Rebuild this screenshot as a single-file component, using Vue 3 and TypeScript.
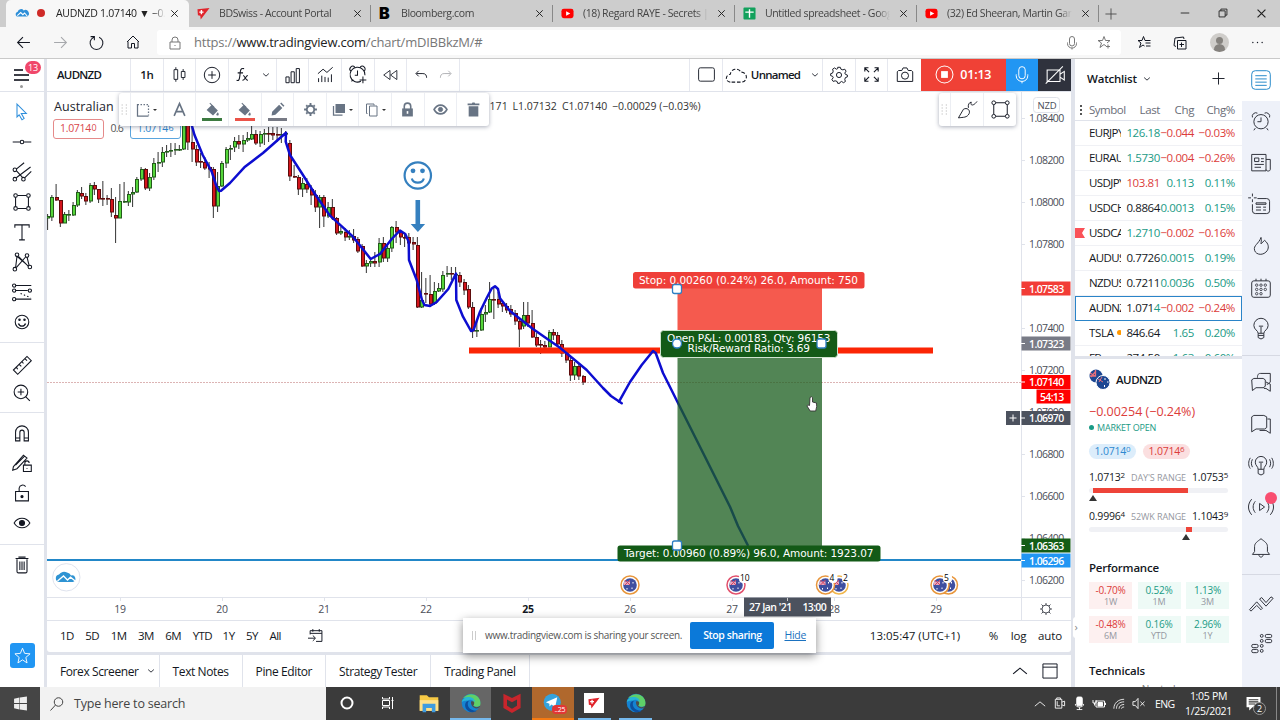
<script setup lang="ts">
import { h } from 'vue'
import type { FunctionalComponent } from 'vue'

// Icon markup, drawn on a 28x28 grid
const icons: Record<string, string> = {
  cloudLogo: '<path fill="#2f8fd8" stroke="none" d="M2 22a6 6 0 0 1 2-11 8 8 0 0 1 14-3 7 7 0 0 1 8 14z"/><path stroke="#fff" stroke-width="2.500" d="M3 20l8-7 5 5 4-4 6 7"/>',
  bds: '<path fill="#e0242b" stroke="none" d="M1 5l26-3L8 27l-1-8-5-1z"/><path stroke="#fff" stroke-width="3" d="M5 11h9M9.500 6.500v9"/>',
  youtube: '<rect x="1" y="4" width="26" height="20" rx="5" fill="#f00" stroke="none"/><path fill="#fff" stroke="none" d="M11 9l9 5-9 5z"/>',
  sheets: '<rect x="1" y="1" width="26" height="26" rx="2" fill="#12a15c" stroke="none"/><path stroke="#fff" stroke-width="3" d="M5 11h18M14 5v18"/>',
  close: '<path stroke-width="3" d="M4 4l20 20M24 4L4 24"/>',
  back: '<path d="M26 14H3M13 4L3 14l10 10"/>',
  forward: '<path d="M2 14h23M15 4l10 10-10 10"/>',
  reload: '<path d="M9 4a12 12 0 1 0 10 0M3 3h7v7"/>',
  home: '<path d="M4 13v13h7v-9h6v9h7V13M2 14L14 2l12 12"/>',
  padlock: '<path d="M4 12h20v14H4zM8 12V8a6 6 0 0 1 12 0v4M14 18v2"/>',
  mic: '<rect x="9" y="1" width="10" height="19" rx="5"/><path d="M5 13v2c0 12 18 12 18 0v-2M14 24v3"/>',
  starPlus: '<path d="M18 20l-4-3-8 6 3-9-7-5h9l3-8 3 8h9l-6 5M22 17v8M18 21h8"/>',
  starList: '<path d="M15 20l-3-2-7 5 3-9-6-5h8l3-8 3 8h11M17 14h10M18 20h9"/>',
  collections: '<path d="M9 9h17v17H9zM6 21l-4-2L4 4l17-2 1 4M17 13v9M13 17h9"/>',
  dots: '<path stroke-width="3" stroke-linecap="round" d="M4 14h0M14 14h0M24 14h0"/>',
  plus: '<path stroke-width="2" d="M14 1v26M1 14h26"/>',
  minus: '<path stroke-width="2.500" d="M2 14h24"/>',
  restore: '<path stroke-width="2.500" d="M3 8h17v17H3zM8 8V3h17v17h-5"/>',
  candles: '<path d="M5 6h6v16H5zM8 2v4M8 22v4M17 9h6v10h-6zM20 5v4M20 19v4"/>',
  compare: '<circle cx="14" cy="14" r="12"/><path d="M14 8v12M8 14h12"/>',
  fx: '<path stroke-width="2" d="M3 25c5 1 5-2 6-8l1-9c1-5 3-6 7-5M5 11h10M15 16c4 0 4 9 9 9M24 16c-4 0-5 9-10 9"/>',
  chevron: '<path stroke-width="3" d="M4 9l10 9 10-9"/>',
  chevronUp: '<path stroke-width="2" d="M2 19L14 9l12 10"/>',
  bars: '<path d="M3 17h5v9H3zM11 9h5v17h-5zM19 4h5v22h-5z"/>',
  financials: '<path d="M3 12l8-7 6 5 9-8M4 25v-6M9 25V15M14 25v-8M19 25v-7M24 25V13"/>',
  alarmPlus: '<path d="M19 24a11 11 0 1 1 6-9M14 8v7h-4M4 9a4 4 0 0 1 6-6M18 3a4 4 0 0 1 6 6M5 24l3-2M22 17v10M17 22h10"/>',
  rewind: '<path d="M14 6v16L3 14zM26 6v16l-11-8z"/>',
  undo: '<path stroke-width="2" d="M8 6l-6 6 6 6M3 12h14c6 0 8 4 8 9"/>',
  redo: '<path stroke-width="2" d="M20 6l6 6-6 6M25 12H11c-6 0-8 4-8 9"/>',
  frame: '<rect x="1" y="3" width="26" height="22" rx="3"/>',
  cloudDash: '<path stroke-dasharray="5 2.500" d="M6 24a5.500 5.500 0 0 1 0-11 8 8 0 0 1 15-3 7 7 0 0 1 1 14z"/>',
  gear: '<circle cx="14" cy="14" r="4"/><path d="M12 2h4l1 3 3 1 3-1 2 3-2 3 1 2 3 1v3l-3 1-1 3 1 3-3 2-3-2-2 1-1 2h-3l-1-3-3-1-3 1-2-3 2-3-1-2-3-1v-3l3-1 1-3-1-3 3-2 3 2 2-1z"/>',
  gearBold: '<circle cx="14" cy="14" r="7" stroke-width="3.500"/><path stroke-width="3.500" d="M14 2v4M14 22v4M2 14h4M22 14h4M6 6l2 2M20 20l2 2M6 22l2-2M20 8l2-2"/>',
  sun: '<circle cx="14" cy="14" r="8"/><path d="M14 2v4M14 22v4M2 14h4M22 14h4M5 5l3 3M20 20l3 3M5 23l3-3M20 8l3-3"/>',
  expand: '<path stroke-width="1.800" d="M3 9V3h6M3 3l7 7M19 3h6v6M25 3l-7 7M3 19v6h6M3 25l7-7M19 25h6v-6M25 25l-7-7"/>',
  camera: '<path d="M4 7h5l2-4h6l2 4h5l2 2v15H2V9z"/><circle cx="14" cy="15" r="5.500"/>',
  stop: '<circle cx="14" cy="14" r="12.500"/><path fill="#fff" stroke="none" d="M9 9h10v10H9z"/>',
  noCamera: '<path d="M3 7h18v16H3zM21 13l6-4v12l-6-4M1 26L25 2"/>',
  grip: '<path stroke-width="2.500" stroke-dasharray="2.500 4" d="M9 3v23M18 3v23"/>',
  dashBox: '<path stroke-width="2.500" d="M3 2v24h22"/><path stroke-width="2.500" stroke-dasharray="3 3" d="M3 3h22v22"/>',
  letterA: '<path stroke-width="3" d="M4 26L14 3l10 23M8 18h12"/>',
  bucket: '<path fill="currentColor" stroke="none" d="M13 5l11 11-9 9L3 15zM24 19c5 7-3 8-3 4z"/><path stroke-width="2" d="M9 2l8 8"/>',
  pencil: '<path fill="currentColor" stroke="none" d="M3 25l1-7L17 5l6 6-13 13zM19 3l2-2 6 6-2 2z"/>',
  layers: '<path fill="currentColor" stroke="none" d="M7 2h19v18H7z"/><path stroke-width="2.500" d="M3 6v18h18"/>',
  copy: '<path stroke-width="2" d="M9 6h15v20H9zM5 21H3V2h15v3"/>',
  lockBold: '<path fill="currentColor" stroke="none" d="M4 12h20v15H4z"/><path stroke-width="3" d="M8 13V8a6 6 0 0 1 12 0v5"/><path stroke="#fff" stroke-width="3" d="M14 17v5"/>',
  eyeBold: '<path stroke-width="3" d="M2 14c6-11 18-11 24 0-6 11-18 11-24 0z"/><circle cx="14" cy="14" r="4" fill="currentColor"/>',
  binBold: '<path fill="currentColor" stroke="none" d="M5 8h18v19H5zM3 3h8l1-2h4l1 2h8v3H3z"/>',
  brush: '<path d="M2 25l7-12c5-3 10 1 8 6-3 6-8 5-15 6zM16 11c-1-4 1-8 4-8-2 5 3 6 8-1"/>',
  square: '<path d="M5 8v12M23 8v12M8 5h12M8 23h12"/><circle cx="5" cy="5" r="2.500"/><circle cx="23" cy="5" r="2.500"/><circle cx="5" cy="23" r="2.500"/><circle cx="23" cy="23" r="2.500"/>',
  cursor: '<path d="M7 3l13 13h-7l4 7-3 2-4-7-3 3z"/>',
  line: '<path d="M1 14h10M17 14h10"/><circle cx="14" cy="14" r="2.500"/>',
  pitchfork: '<path d="M6 10l11-9M6 12l9 10M6 22l20-15M18 22l9-9"/><circle cx="4" cy="11" r="2.500"/><circle cx="4" cy="24" r="2.500"/><circle cx="16" cy="24" r="2.500"/>',
  text: '<path d="M4 8V4h20v4M14 4v21M10 25h8"/>',
  pattern: '<path d="M5 22L7 6l14 12M21 7l3 12M19 7L6 22M9 6l14 14"/><circle cx="7" cy="4" r="2.500"/><circle cx="21" cy="5" r="2.500"/><circle cx="4" cy="24" r="2.500"/><circle cx="25" cy="21" r="2.500"/>',
  forecast: '<path d="M5 5h22M5 12h17M5 24h22"/><path stroke-dasharray="2 3" d="M12 16l14 6"/><circle cx="3" cy="5" r="2.300"/><circle cx="3" cy="12" r="2.300"/><circle cx="25" cy="12" r="2.300"/><circle cx="3" cy="24" r="2.300"/>',
  smile: '<circle cx="14" cy="14" r="9.500"/><path stroke-width="2" d="M9 16c2 5 8 5 10 0"/><circle cx="10.500" cy="11" r="1" fill="currentColor"/><circle cx="17.500" cy="11" r="1" fill="currentColor"/>',
  ruler: '<path d="M2 21L21 2l6 6L8 27zM6 17l2 3M10 13l3 3M14 9l2 3M18 5l3 3"/>',
  zoom: '<circle cx="12.500" cy="12.500" r="9.500"/><path d="M19 19l6 6M12.500 8v9M8 12.500h9"/>',
  magnet: '<path d="M5 25V13a9 9 0 0 1 18 0v12h-6V13a3 3 0 0 0-6 0v12zM5 21h6M17 21h6"/>',
  pencilLock: '<path d="M2 19L16 3l5 4L7 22l-6 2zM5 17L18 4M16 17h11v9H16zM18 17v-3a3 3 0 0 1 6 0M21 21v1"/>',
  unlock: '<path d="M5 12h18v13H5zM10 12V7a5 5 0 0 1 9-2"/><circle cx="14" cy="19" r="1.500" fill="currentColor"/>',
  eye: '<path d="M3 14c5-9 17-9 22 0-5 9-17 9-22 0z"/><circle cx="14" cy="14" r="3.500" fill="currentColor"/>',
  bin: '<path d="M7 6v17a2 2 0 0 0 2 2h10a2 2 0 0 0 2-2V6M5 5h18M9 3h10M11 9v12M14 9v12M17 9v12"/>',
  star: '<path d="M14 2l3.500 8.500 9 .7-7 6 2 9-7.500-5-7.500 5 2-9-7-6 9-.7z"/>',
  goto: '<path stroke-width="1.800" d="M4 12V5h22v20H15M4 10h22M9 2v5M21 2v5M0 19h13M9 14l5 5-5 5"/>',
  panel: '<path d="M3 3h22v22H3zM3 8h22"/>',
  list: '<rect x="1" y="1" width="26" height="26" rx="5"/><path d="M6 8h16M6 12.500h16M6 17h16M6 21.500h16"/>',
  alarm: '<circle cx="14" cy="15" r="10"/><path d="M14 9v6H9M2 9a5 5 0 0 1 7-6M19 3a5 5 0 0 1 7 6M6 24l-2 3M22 24l2 3"/>',
  news: '<path d="M1 2h20v23H1zM21 9h6v14c0 3-6 3-6 0M5 7h6v5H5zM14 8h4M14 12h4M5 16h13M5 20h9"/>',
  note: '<path d="M9 5h13a4 4 0 0 1 4 4v13a4 4 0 0 1-4 4H6a4 4 0 0 1-4-4v-9M2 -2v4M2 6v4M-4 4h4M4 4h4M7 11h14v2H7zM7 17h7M17 17h4M7 21h7M17 21h4"/>',
  flame: '<path d="M14 2c1 4 0 7 0 9l5-5c6 5 6 10 4 14-5 8-16 7-18 0-2-7 6-9 9-18z"/>',
  calendar: '<rect x="1" y="4" width="26" height="23" rx="3"/><path d="M7 1v3M14 1v3M21 1v3"/><g stroke-width="1.200"><circle cx="8" cy="10" r="1.700"/><circle cx="14" cy="10" r="1.700"/><circle cx="20" cy="10" r="1.700"/><circle cx="8" cy="16" r="1.700"/><circle cx="14" cy="16" r="1.700"/><circle cx="20" cy="16" r="1.700"/><circle cx="8" cy="22" r="1.700"/><circle cx="14" cy="22" r="1.700"/></g>',
  bulb: '<path d="M10 20c0-4-6-5-6-11a10 10 0 0 1 20 0c0 6-6 7-6 11zM10 20v6l4 2 4-2v-6M14 11v9M11 10h6M10 23h8"/>',
  chats: '<path d="M1 11l3-2h13l3 2v9l-3 2H7l-5 4zM9 8c0-5 2-6 4-6h14v12l-3 3h-2M21 14l6 3v10l-6-4h-3"/>',
  chat: '<path d="M1 4l3-2h14l4 2v15l-3 2H7l-6 4zM23 7h4v20l-6-4h-9"/>',
  ideas: '<path d="M10 20c0-4-4-5-4-10a8 8 0 0 1 16 0c0 5-4 6-4 10zM10 20v6l4 2 4-2v-6M14 11v9M11 10h6M2 6c-2 4-2 7 0 11M-1 4c-3 5-3 11 0 15M26 6c2 4 2 7 0 11M29 4c3 5 3 11 0 15"/>',
  stream: '<path d="M12 9l7 5-7 5zM6 6c-4 5-4 11 0 16M1 3c-6 7-6 15 0 22M22 6c4 5 4 11 0 16M27 3c6 7 6 15 0 22"/>',
  bell: '<path d="M2 23l3-4v-7c0-5 4-7 9-11 5 4 9 6 9 11v7l3 4zM11 23c0 5 6 5 6 0"/>',
  ideasFlow: '<path d="M-2 22L8 11l8 9-2 2-6-6-8 8zM12 7l3-2 6 7 7-8 3 2-10 11z"/>',
  dom: '<circle cx="15" cy="4" r="2"/><circle cx="15" cy="11" r="2"/><circle cx="15" cy="18" r="2"/><circle cx="15" cy="25" r="2"/><rect x="20" y="2" width="9" height="4.500" rx="2"/><rect x="20" y="9" width="9" height="4.500" rx="2"/><rect x="1" y="16" width="9" height="4.500" rx="2"/><rect x="1" y="23" width="9" height="4.500" rx="2"/>',
  windows: '<path fill="#eee" stroke="none" d="M2 5l10-2v10H2zM13 3l13-2v12H13zM2 15h10v10L2 23zM13 15h13v12l-13-2z"/>',
  search: '<circle cx="17" cy="10" r="8.500" stroke-width="2"/><path stroke-width="2" d="M11 16L1 27"/>',
  cortana: '<circle cx="14" cy="14" r="11" stroke-width="4"/>',
  taskview: '<path stroke-width="2" d="M3 2v4h14V2M3 9h14v10H3zM3 26v-4h14v4M23 2v24M21 9h4"/>',
  folder: '<path fill="#f6c945" stroke="none" d="M1 3h10l3 3h13v19H1z"/><path fill="#ffe08a" stroke="none" d="M1 10h26v15H1z"/><path fill="#3f9be0" stroke="none" d="M5 15h18v12h-5v-6h-8v6H5z"/>',
  edge: '<circle cx="14" cy="14" r="13" fill="#1583d2" stroke="none"/><path fill="#5fd068" stroke="none" d="M3 7C12-4 30 3 27 17c-2 3-7 3-10 1 4-7-4-13-14-11z"/><path fill="#27b6d6" stroke="none" d="M1 13C2 4 18 2 20 13c0 0-4-5-9-3C7 11 3 10 1 13z"/><path fill="#0d4f9e" stroke="none" d="M11 11c-4 6 0 14 11 14C13 31 4 22 6 15c1-3 3-4 5-4z"/><path fill="#4d4d4d" stroke="none" d="M14 12c6-2 5 4 3 6 3 3 7 2 10 0-3 7-14 3-13-6z"/>',
  mcafee: '<path fill="#c9252c" stroke="none" d="M2 1l12 6 12-6v20l-12 7-12-7zM7 9v9l7 4 7-4V9l-7 4z" fill-rule="evenodd"/>',
  telegram: '<circle cx="13" cy="13" r="12" fill="#35a3dc" stroke="none"/><path fill="#fff" stroke="none" d="M4 13l16-7-3 14-5-4-3 3v-4z"/>',
  meet: '<path d="M5 5h14v19H5zM8 5V2h8v3M19 11l6-2v10l-6-2M9 9v10h6"/>',
  micSolid: '<rect x="8" y="0" width="12" height="19" rx="3" fill="#fff"/><path d="M5 15c0 9 18 9 18 0M14 22v6M8 27h12"/>',
  battery: '<path d="M8 8h17v12H8zM25 12h2v4M2 6v6h6V6M5 12v5"/><path fill="#fff" d="M12 11h9v7h-9z"/>',
  wifi: '<path d="M2 25C2 12 12 3 26 3M8 25C8 15 15 9 26 9M14 25c0-6 5-10 12-10M20 25c0-3 2-4 6-4"/>',
  mute: '<path d="M2 10h5l6-7v22l-6-7H2zM18 10l9 9M27 10l-9 9"/>',
  notes: '<path fill="#fff" stroke="none" d="M1 2h26v19H12l-6 6v-6H1z"/><path stroke="#333" stroke-width="2" d="M5 7h18M5 11h18M5 15h12"/>',
}

const Icon: FunctionalComponent<{ name: string; size?: number }> = (props) =>
  h('svg', {
    class: 'icon',
    viewBox: '0 0 28 28',
    width: props.size ?? 20,
    height: props.size ?? 20,
    innerHTML: icons[props.name],
  })

const tabs = [
  { icon: 'bds', title: 'BDSwiss - Account Portal' },
  { icon: 'bloom', title: 'Bloomberg.com' },
  { icon: 'youtube', title: '(18) Regard RAYE - Secrets | O' },
  { icon: 'sheets', title: 'Untitled spreadsheet - Google' },
  { icon: 'youtube', title: '(32) Ed Sheeran, Martin Garrix' },
]

const drawTools = [
  ['cursor', 'line', 'pitchfork', 'square', 'text', 'pattern', 'forecast', 'smile'],
  ['ruler', 'zoom'],
  ['magnet', 'pencilLock', 'unlock', 'eye'],
  ['bin'],
]

const floatTools = [
  { icon: 'dashBox', caret: true },
  { icon: 'letterA' },
  { icon: 'bucket', bar: 'green' },
  { icon: 'bucket', bar: 'red' },
  { icon: 'pencil', bar: 'grey' },
  { icon: 'gearBold' },
  { icon: 'layers', caret: true },
  { icon: 'copy', caret: true },
  { icon: 'lockBold' },
  { icon: 'eyeBold' },
  { icon: 'binBold' },
]

const railGroups = [
  ['list', 'alarm', 'news', 'note', 'flame', 'calendar', 'bulb'],
  ['chats', 'chat', 'ideas', 'stream', 'bell'],
  ['ideasFlow', 'dom'],
]

interface Quote {
  symbol: string
  last: string
  tail?: string
  lastTone: string
  chg: string
  pct: string
  flag?: boolean
  dot?: boolean
  active?: boolean
}

const quotes: Quote[] = [
  { symbol: 'EURJPY', last: '126.18', lastTone: 'up', chg: '−0.044', pct: '−0.03%' },
  { symbol: 'EURAUD', last: '1.5730', lastTone: 'up', chg: '−0.004', pct: '−0.26%' },
  { symbol: 'USDJPY', last: '103.81', lastTone: 'down', chg: '0.113', pct: '0.11%' },
  { symbol: 'USDCHF', last: '0.8864', lastTone: '', chg: '0.0013', pct: '0.15%' },
  { symbol: 'USDCAD', last: '1.2710', lastTone: 'up', chg: '−0.002', pct: '−0.16%', flag: true },
  { symbol: 'AUDUSD', last: '0.7726', lastTone: '', chg: '0.0015', pct: '0.19%' },
  { symbol: 'NZDUSD', last: '0.7211', lastTone: '', chg: '0.0036', pct: '0.50%' },
  { symbol: 'AUDNZD', last: '1.071', tail: '4', lastTone: '', chg: '−0.002', pct: '−0.24%', active: true },
  { symbol: 'TSLA', last: '846.64', lastTone: '', chg: '1.65', pct: '0.20%', dot: true },
  { symbol: 'FB', last: '274.50', lastTone: '', chg: '1.63', pct: '0.60%' },
]

const tone = (v: string) => (v.startsWith('−') || v.startsWith('-') ? 'down' : 'up')

const performance = [
  ['-0.70%', '1W'], ['0.52%', '1M'], ['1.13%', '3M'],
  ['-0.48%', '6M'], ['0.16%', 'YTD'], ['2.96%', '1Y'],
]

const ranges = ['1D', '5D', '1M', '3M', '6M', 'YTD', '1Y', '5Y', 'All']
const bottomTabs = ['Text Notes', 'Pine Editor', 'Strategy Tester', 'Trading Panel']

const priceTicks = [
  ['1.08400', 118], ['1.08200', 160], ['1.08000', 202], ['1.07800', 244], ['1.07400', 328],
  ['1.07200', 370], ['1.07000', 412], ['1.06800', 454], ['1.06600', 496], ['1.06400', 538], ['1.06200', 580],
] as const

const priceTags = [
  { text: '1.07583', y: 288.5, fill: '#f23c36' },
  { text: '1.07323', y: 343.5, fill: '#787b86' },
  { text: '1.07140', y: 382, fill: '#ff0000' },
  { text: '1.06970', y: 418, fill: '#4c525e' },
  { text: '1.06363', y: 545.5, fill: '#145d16' },
  { text: '1.06296', y: 560.5, fill: '#2196f3' },
]

const dayTicks = [
  ['19', 120], ['20', 222], ['21', 324], ['22', 426], ['25', 528], ['26', 630], ['27', 732], ['28', 834], ['29', 936],
] as const

// direction, high, body top, body bottom, low
const candleData = `g214 216 218 230;g195 197 217 221;r184 197 200 201;r200 200 223 227;g212 214 223 223;g210 214 215 221;g202 205 215 216;g190 192 205 207;r187 193 196 199;r193 196 201 205;g183 185 201 203;r182 185 189 195;r189 189 199 203;r181 198 199 206;r195 198 199 205;r188 199 212 217;r197 215 218 243;g184 201 218 218;g182 201 202 203;g191 194 202 206;g187 192 194 207;g177 179 192 193;g167 169 179 181;r168 169 188 190;g173 177 188 191;g158 163 177 180;g152 162 163 172;g147 152 162 167;g145 151 152 157;g143 150 151 157;g143 149 150 155;g145 149 150 151;g118 120 149 150;r118 120 142 150;r123 142 149 162;r145 149 162 166;r153 161 162 168;r157 162 168 170;r162 167 169 178;r167 169 206 218;g172 186 206 212;g161 163 186 187;g147 149 163 168;g145 148 149 160;g137 141 147 152;r135 141 144 149;g135 140 144 152;g132 138 140 142;g126 134 139 140;r130 134 143 145;g131 134 143 147;g129 133 134 145;r127 133 134 142;r127 133 135 140;r127 134 135 142;g128 134 135 143;g131 133 134 140;r140 143 176 181;r165 176 177 178;r175 177 189 195;g178 183 189 197;r178 184 189 193;r185 189 195 205;r190 195 207 212;g195 197 207 228;r195 197 216 227;g202 207 216 218;r199 207 218 220;r217 218 233 235;g227 231 233 235;r228 232 237 241;g230 236 237 240;r229 236 240 243;r237 239 251 253;r244 246 266 267;g260 263 266 273;g258 261 263 267;r252 261 263 267;g238 243 262 267;r237 243 258 262;g246 248 258 262;g226 227 248 252;r221 227 232 243;r230 231 237 245;r233 237 238 247;r233 237 243 246;r237 242 244 250;r237 245 307 308;g272 300 307 308;r278 293 294 303;r275 294 304 305;g282 291 303 305;g283 288 291 292;g271 275 289 292;g266 273 274 277;r267 273 274 280;g267 274 275 280;r272 275 282 287;r279 282 290 295;r285 289 307 309;r302 307 331 338;g320 330 331 337;g308 314 330 331;g305 312 314 322;g282 299 312 313;r287 299 300 319;r292 299 304 308;r300 303 306 312;r303 306 310 313;r305 309 314 317;r310 313 321 325;r318 321 329 347;g302 315 326 329;r302 315 323 327;r310 323 337 338;r333 337 345 347;r340 344 345 354;r341 345 347 350;g330 332 347 347;r329 332 335 340;r332 335 344 347;r340 344 353 357;r352 353 360 363;r356 360 375 381;g362 366 375 380;r363 366 376 380;r375 376 382 385`

const candles = candleData.split(';').map((row, i) => {
  const [high, top, bottom, low] = row.slice(1).split(' ').map(Number)
  const x = 47.6 + i * 4.25
  return { x, bx: Math.round(x - 1.6), up: row[0] === 'g', high, top, bottom, low }
})

const events = [
  { x: 630, ring: '#e8963c', count: '' },
  { x: 736, ring: '#e2506c', count: '10' },
  { x: 839, ring: '#f0b64c', count: '2' },
  { x: 825.5, ring: '#e8963c', count: '4' },
  { x: 948.5, ring: '#e8963c', count: '' },
  { x: 940, ring: '#e8963c', count: '5' },
]

const anchors = [
  { x: 677, y: 289, r: 2 },
  { x: 677, y: 343.5, r: 4.5 },
  { x: 821.5, y: 343.5, r: 2 },
  { x: 677, y: 545.5, r: 2 },
]

const taskbarApps = [
  { icon: 'cortana', state: '' },
  { icon: 'taskview', state: '' },
  { icon: 'folder', state: '' },
  { icon: 'edge', state: 'focused' },
  { icon: 'mcafee', state: '' },
  { icon: 'telegram', state: 'alert' },
  { icon: 'bds', state: 'running' },
  { icon: 'edge', state: 'running' },
]
</script>

<template>
  <div class="screen">
    <header class="tabstrip">
      <div class="tab tab--active">
        <Icon name="cloudLogo" :size="12" />
        <i class="rec-dot" />
        <span class="tab__title">AUDNZD 1.07140 ▼ −0.</span>
        <Icon class="tab__close" name="close" :size="9" />
      </div>
      <div v-for="(tab, i) in tabs" :key="i" class="tab">
        <b v-if="tab.icon === 'bloom'" class="bloom">B</b>
        <Icon v-else :name="tab.icon" :size="13" />
        <span class="tab__title">{{ tab.title }}</span>
        <Icon class="tab__close" name="close" :size="9" />
      </div>
      <Icon class="tabstrip__new" name="plus" :size="12" />
      <div class="window-buttons">
        <Icon name="minus" :size="10" />
        <Icon name="restore" :size="10" />
        <Icon name="close" :size="11" />
      </div>
    </header>

    <div class="addressbar">
      <div class="nav">
        <Icon name="back" :size="15" />
        <Icon class="faded" name="forward" :size="15" />
        <Icon name="reload" :size="15" />
        <Icon name="home" :size="14" />
      </div>
      <div class="url">
        <Icon name="padlock" :size="14" />
        <span class="url__text">https://<b>www.tradingview.com</b>/chart/mDIBBkzM/#</span>
        <Icon name="mic" :size="14" />
        <Icon name="starPlus" :size="14" />
      </div>
      <div class="browser-actions">
        <Icon name="starList" :size="14" />
        <Icon name="collections" :size="14" />
        <i class="avatar"><i /></i>
        <Icon name="dots" :size="13" />
      </div>
    </div>

    <main class="app">
      <nav class="draw">
        <div class="draw__menu">
          <i /><i /><i />
          <span class="badge">13</span>
        </div>
        <div v-for="(group, g) in drawTools" :key="g" class="draw__group">
          <div v-for="name in group" :key="name" class="draw__tool" :class="{ 'draw__tool--active': name === 'cursor' }">
            <Icon :name="name" :size="20" />
          </div>
        </div>
        <div class="draw__fav"><Icon name="star" :size="17" /></div>
      </nav>

      <section class="center">
        <div class="topbar">
          <div class="cell cell--symbol">AUDNZD</div>
          <div class="cell cell--text">1h</div>
          <div class="cell"><Icon name="candles" :size="17" /></div>
          <div class="cell"><Icon name="compare" :size="18" /></div>
          <div class="cell cell--fx"><Icon name="fx" :size="15" /><Icon name="chevron" :size="8" /></div>
          <div class="cell"><Icon name="bars" :size="18" /></div>
          <div class="cell"><Icon name="financials" :size="18" /></div>
          <div class="cell"><Icon name="alarmPlus" :size="19" /></div>
          <div class="cell"><Icon name="rewind" :size="16" /></div>
          <div class="cell cell--undo"><Icon name="undo" :size="13" /><Icon class="faded" name="redo" :size="13" /></div>
          <div class="topbar__space" />
          <div class="cell"><Icon name="frame" :size="17" /></div>
          <div class="cell cell--layout"><Icon name="cloudDash" :size="20" />Unnamed<Icon name="chevron" :size="8" /></div>
          <div class="cell"><Icon name="gear" :size="18" /></div>
          <div class="cell"><Icon name="expand" :size="17" /></div>
          <div class="cell cell--last"><Icon name="camera" :size="18" /></div>
          <div class="cell cell--rec"><Icon name="stop" :size="19" />01:13</div>
          <div class="cell cell--mic"><Icon name="mic" :size="18" /></div>
          <div class="cell cell--cam"><Icon name="noCamera" :size="20" /></div>
        </div>

        <div class="chart">
          <svg class="chart__canvas" viewBox="47 92 1024 528" width="1024" height="528">
            <g class="axis">
              <path d="M47 597.500H1071M1021.500 92V620" />
              <path v-for="[label, y] in priceTicks" :key="label" :d="`M1021 ${y + 0.5}h4`" />
              <path v-for="[label, x] in dayTicks" :key="label" :d="`M${x + 0.5} 597v4`" />
            </g>
            <text v-for="[label, y] in priceTicks" :key="label" class="tick" x="1029" :y="y + 4" textLength="35">{{ label }}</text>
            <text
              v-for="[label, x] in dayTicks"
              :key="label"
              class="tick tick--day"
              :class="{ 'tick--bold': label === '25' }"
              :x="x"
              y="613"
            >{{ label }}</text>

            <path class="current-line" d="M47 382.500H1021" />
            <path class="blue-level" d="M47 560H1021" />

            <g v-for="(c, i) in candles" :key="i">
              <path class="wick" :d="`M${c.x} ${c.high}V${c.low}`" />
              <rect
                :class="c.up ? 'body-up' : 'body-down'"
                :x="c.bx + 0.5"
                :y="c.top + 0.5"
                width="3"
                :height="Math.max(0.6, c.bottom - c.top - 0.5)"
              />
            </g>

            <path class="red-level" d="M469 350.500H933" />
            <path
              class="sketch"
              d="M191.700 125L194.500 135 202.700 155 211.700 171.700 216 185 219 191 221 190.700 230 183 245 166.700 263 153 286 132.700 285.700 141.700 290 155 301.700 173 315 194 330 215.700 353 236.700 370.700 259 380 254 391.700 239 400 230.500 405.300 234 408.700 241.700 409 260 416.700 280 422 300 424.500 305 430 306 436.700 302 448.300 289 456 273.500 456.300 300 463 316.700 471 331 473.500 330 480 311.700 486.700 298 491.700 288.500 495 286.300 498 289 500 298.300 510 311 533 329 560 347.700 586.700 370 603 388 611 396 621.700 403.300"
            />
            <path class="sketch" d="M619 401.700L630 382 641.700 365 653 351 655.700 353 663 373 678 403 705 456.700 730 506.700 738 526 747.700 545" />

            <rect x="677.500" y="288" width="144.500" height="56" fill="#f44336" fill-opacity=".88" />
            <rect x="677.500" y="344" width="144.500" height="203" fill="#1b5e20" fill-opacity=".76" />

            <g class="position">
              <rect x="633" y="272" width="231.500" height="16.500" rx="2.500" fill="#ef3f39" />
              <text x="639" y="283.700" textLength="219">Stop: 0.00260 (0.24%) 26.0, Amount: 750</text>
              <rect x="660.500" y="330.500" width="177" height="27" rx="3" fill="#135a17" stroke="#cfe3cf" />
              <text x="667" y="342" textLength="163.500">Open P&amp;L: 0.00183, Qty: 96153</text>
              <text x="687.500" y="352.300" textLength="122.500">Risk/Reward Ratio: 3.69</text>
              <rect x="617.500" y="545.500" width="263" height="16" rx="2.500" fill="#135a17" />
              <text x="624" y="557" textLength="249.500">Target: 0.00960 (0.89%) 96.0, Amount: 1923.07</text>
            </g>
            <rect
              v-for="(a, i) in anchors"
              :key="i"
              class="anchor"
              :x="a.x - 4.5"
              :y="a.y - 4.5"
              width="9"
              height="9"
              :rx="a.r"
            />

            <g class="sticker">
              <circle cx="417.800" cy="175.500" r="13.200" />
              <circle class="sticker__fill" cx="413" cy="170.800" r="2.400" />
              <circle class="sticker__fill" cx="422.500" cy="170.800" r="2.400" />
              <path d="M411.800 178.500c1.500 5.500 10.500 5.500 12 0" />
              <path class="sticker__fill" d="M415.500 200h4.600v24h5l-7.200 8-7.200-8h4.800z" />
            </g>

            <g v-for="(e, i) in events" :key="i">
              <circle :cx="e.x" cy="585" r="9" fill="#fff" :stroke="e.ring" stroke-width="1.500" />
              <circle :cx="e.x" cy="585" r="6.800" fill="#3f4fa0" />
              <path :d="`M${e.x - 6} 581.500h6v3.500h-6.500z`" fill="#e6a7bd" />
              <path :d="`M${e.x - 5} 580l5 5M${e.x} 580l-5 5`" stroke="#d04465" />
              <path :d="`M${e.x + 3} 582v1.500M${e.x + 2} 587.500v1.500M${e.x - 3} 588v1.500`" stroke="#fff" />
            </g>
            <g v-for="(e, i) in events" :key="`n${i}`">
              <rect v-if="e.count" :x="e.x + 3" y="573" :width="e.count.length * 5 + 4" height="10" rx="4" fill="#fff" />
              <text v-if="e.count" class="count" :x="e.x + 4" y="581">{{ e.count }}</text>
            </g>

            <g v-for="tag in priceTags" :key="tag.text">
              <rect x="1021.500" :y="tag.y - 7" width="49" height="14" :fill="tag.fill" />
              <path :d="`M1021 ${tag.y}h4`" stroke="#fff" />
              <text class="tag" x="1029" :y="tag.y + 4" textLength="35">{{ tag.text }}</text>
            </g>
            <rect x="1036.500" y="389.500" width="34" height="14" fill="#f00" />
            <text class="tag" x="1040" y="400.500" textLength="24">54:13</text>
            <rect x="1006" y="411" width="14" height="14" fill="#4c525e" />
            <path d="M1009.500 418h7M1013 414.500v7" stroke="#fff" />
            <rect class="ccy" x="1033.500" y="97.500" width="26" height="15" rx="3" />
            <text class="tick tick--ccy" x="1037.500" y="108.500">NZD</text>

            <rect x="744" y="597.500" width="87" height="19" fill="#4c525e" />
            <path d="M787.500 598v3" stroke="#ccc" />
            <text class="tag" x="749" y="611" textLength="43">27 Jan '21</text>
            <text class="tag" x="802.500" y="611" textLength="24">13:00</text>

            <text class="legend" x="54" y="110.500" textLength="59.500">Australian</text>
            <text class="legend legend--small" x="489.500" y="110" textLength="18">171</text>
            <text class="legend legend--small" x="512.500" y="110" textLength="44">L1.07132</text>
            <text class="legend legend--small" x="562" y="110" textLength="45">C1.07140</text>
            <text class="legend legend--small" x="612" y="110" textLength="88.500">−0.00029 (−0.03%)</text>
            <rect class="quote quote--sell" x="53.500" y="119.500" width="50" height="19" rx="2.500" />
            <text class="quote-text quote-text--sell" x="60" y="132" textLength="31">1.0714</text>
            <text class="quote-text quote-text--sup quote-text--sell" x="91.500" y="131">0</text>
            <text class="quote-text" x="110.500" y="132" textLength="13">0.6</text>
            <rect class="quote quote--buy" x="130.500" y="119.500" width="50" height="19" rx="2.500" />
            <text class="quote-text quote-text--buy" x="137" y="132" textLength="31">1.0714</text>
            <text class="quote-text quote-text--sup quote-text--buy" x="168.500" y="131">6</text>

            <circle cx="66.300" cy="577.300" r="13.700" fill="#fff" stroke="#dfe3ee" />
            <path d="M59 582a3.800 3.800 0 0 1 0-7.500 6 6 0 0 1 8-2 5 5 0 0 1 4 3 3.300 3.300 0 0 1 2 6.500z" fill="#2e93d3" />
            <path d="M57.500 581l6-5 4 4 3-2.800 5 4" fill="none" stroke="#fff" stroke-width="1.300" />
            <path
              d="M810 397.500q1.500-1.500 2.500 0v4.500l4 1q.8 3-.8 8h-5.500l-3.200-5q0-2 2.500-.5z"
              fill="#fff"
              stroke="#333"
              stroke-width=".9"
            />
          </svg>

          <div class="float float--drawing">
            <div class="float__grip"><Icon name="grip" :size="13" /></div>
            <div v-for="(tool, i) in floatTools" :key="i" class="float__cell">
              <Icon :name="tool.icon" :size="tool.caret ? 14 : 15" />
              <i v-if="tool.caret" class="caret" />
              <i v-if="tool.bar" class="float__bar" :class="`float__bar--${tool.bar}`" />
            </div>
          </div>
          <div class="float float--favs">
            <div class="float__grip"><Icon name="grip" :size="13" /></div>
            <div class="float__cell"><Icon name="brush" :size="20" /></div>
            <div class="float__cell"><Icon name="square" :size="21" /></div>
          </div>
        </div>

        <div class="ranges">
          <span v-for="r in ranges" :key="r" class="ranges__item">{{ r }}</span>
          <Icon class="ranges__goto" name="goto" :size="15" />
          <span class="ranges__clock">13:05:47 (UTC+1)</span>
          <span class="ranges__mode ranges__mode--pct">%</span>
          <span class="ranges__mode ranges__mode--log">log</span>
          <span class="ranges__mode">auto</span>
          <span class="axis-gear"><Icon name="sun" :size="14" /></span>
        </div>

        <div class="bottom-tabs">
          <div class="bottom-tabs__item bottom-tabs__item--first">Forex Screener<Icon name="chevron" :size="8" /></div>
          <div v-for="t in bottomTabs" :key="t" class="bottom-tabs__item">{{ t }}</div>
          <div class="bottom-tabs__end">
            <Icon name="chevronUp" :size="16" />
            <Icon name="panel" :size="18" />
          </div>
        </div>
      </section>

      <aside class="side">
        <div class="watch">
          <div class="watch__title">Watchlist<Icon name="chevron" :size="8" /><Icon class="watch__add" name="plus" :size="13" /></div>
          <div class="row row--head">
            <i class="more" />
            <span class="row__symbol">Symbol</span><span>Last</span><span>Chg</span><span>Chg%</span>
          </div>
          <div v-for="q in quotes" :key="q.symbol" class="row" :class="{ 'row--active': q.active }">
            <i v-if="q.flag" class="flag" />
            <span class="row__symbol" :class="{ 'row__symbol--dot': q.dot }">{{ q.symbol }}<i v-if="q.dot" class="status-dot" /></span>
            <span :class="q.lastTone">{{ q.last }}<span v-if="q.tail" class="up">{{ q.tail }}</span></span>
            <span :class="tone(q.chg)">{{ q.chg }}</span>
            <span :class="tone(q.pct)">{{ q.pct }}</span>
          </div>
        </div>

        <div class="detail">
          <div class="detail__name">
            <svg width="21" height="21" viewBox="0 0 21 21">
              <circle cx="7" cy="7" r="6.500" fill="#1c4692" />
              <path d="M1 4l5 3M2 8l5-6M6.500 1v6H1" stroke="#e7707b" stroke-width="1.300" fill="none" />
              <circle cx="14" cy="13.500" r="7" fill="#1c4692" stroke="#fff" />
              <path d="M16 9v2M18 13h1.500M15.500 16v2" stroke="#fff" />
              <path d="M9 10l5 3M13 8l-3 5" stroke="#e7707b" />
            </svg>
            AUDNZD
          </div>
          <div class="detail__change">−0.00254 (−0.24%)</div>
          <div class="detail__market"><i />MARKET OPEN</div>
          <div class="pills">
            <span class="pill pill--buy">1.0714<sup>0</sup></span>
            <span class="pill pill--sell">1.0714<sup>6</sup></span>
          </div>
          <div class="range"><span>1.0713<sup>2</sup></span><em>DAY'S RANGE</em><span>1.0753<sup>5</sup></span></div>
          <div class="track"><i class="track__day" /></div>
          <div class="marker marker--day" />
          <div class="range range--year"><span>0.9996<sup>4</sup></span><em>52WK RANGE</em><span>1.1043<sup>9</sup></span></div>
          <div class="track"><i class="track__year" /></div>
          <div class="marker marker--year" />
          <h4>Performance</h4>
          <div class="perf">
            <div v-for="[value, label] in performance" :key="label" class="perf__tile" :class="`perf__tile--${tone(value)}`">
              <b :class="tone(value)">{{ value }}</b>{{ label }}
            </div>
          </div>
          <h4>Technicals</h4>
          <div class="neutral">Neutral</div>
        </div>
        <div class="side__handle">›</div>
      </aside>

      <nav class="rail">
        <div v-for="(group, g) in railGroups" :key="g" class="rail__group">
          <div v-for="name in group" :key="name" class="rail__item" :class="{ 'rail__item--active': name === 'list' }">
            <Icon :name="name" :size="20" />
            <i v-if="name === 'stream'" class="rail__dot" />
          </div>
        </div>
      </nav>
    </main>

    <div class="share">
      <i class="share__grip" />
      <span>www.tradingview.com is sharing your screen.</span>
      <button class="share__stop">Stop sharing</button>
      <a class="share__hide">Hide</a>
    </div>

    <footer class="taskbar">
      <div class="taskbar__start"><Icon name="windows" :size="15" /></div>
      <div class="taskbar__search"><Icon name="search" :size="14" />Type here to search</div>
      <div v-for="(app, i) in taskbarApps" :key="i" class="task" :class="app.state && `task--${app.state}`">
        <span v-if="app.icon === 'bds'" class="task__tile"><Icon :name="app.icon" :size="12" /></span>
        <Icon v-else :name="app.icon" :size="app.icon === 'cortana' || app.icon === 'taskview' ? 14 : 20" />
        <span v-if="app.state === 'alert'" class="task__count">..25</span>
      </div>
      <div class="tray">
        <Icon name="chevronUp" :size="12" />
        <Icon name="meet" :size="13" />
        <Icon name="micSolid" :size="13" />
        <Icon name="battery" :size="14" />
        <Icon name="wifi" :size="12" />
        <Icon name="mute" :size="13" />
      </div>
      <span class="lang">ENG</span>
      <div class="clock"><span>1:05 PM</span><span>1/25/2021</span></div>
      <div class="notif"><Icon name="notes" :size="15" /><span>2</span></div>
    </footer>
  </div>
</template>

<style>
body {
  margin: 0;
  overflow: hidden;
}
</style>

<style scoped>
.screen {
  width: 1280px;
  height: 720px;
  display: flex;
  flex-direction: column;
  position: relative;
  overflow: hidden;
  background: #fff;
  color: #131722;
  font-family: "Open Sans", "Noto Sans", sans-serif;
  font-size: 12px;
  letter-spacing: -0.2px;
}

.icon {
  flex: none;
  fill: none;
  stroke: currentColor;
  stroke-width: 1.5;
  overflow: visible;
}

.faded {
  opacity: 0.35;
}

.up {
  color: #1a9a85;
}

.down {
  color: #dc3c3a;
}

/* browser chrome */
.tabstrip {
  height: 27px;
  flex: none;
  display: flex;
  align-items: center;
  padding-left: 6px;
  background: #cdcdcd;
  color: #444;
}

.tab {
  box-sizing: border-box;
  width: 182px;
  height: 27px;
  padding: 0 9px 1px 8px;
  display: flex;
  align-items: center;
  gap: 9px;
  position: relative;
}

.tab::after {
  content: "";
  position: absolute;
  right: 0;
  top: 5px;
  height: 17px;
  width: 1px;
  background: #888;
}

.tab--active {
  width: 183px;
  padding: 0 10px 1px;
  background: #f7f7f7;
  border-radius: 5px 5px 0 0;
}

.tab--active::after {
  display: none;
}

.tab__title {
  flex: 1;
  min-width: 0;
  overflow: hidden;
  white-space: nowrap;
  font-size: 10.5px;
  letter-spacing: -0.38px;
  -webkit-mask-image: linear-gradient(to right, #000 90%, transparent);
  mask-image: linear-gradient(to right, #000 90%, transparent);
}

.tab--active .tab__title {
  padding-left: 2px;
  margin-right: -4px;
  color: #222;
  letter-spacing: -0.3px;
}

.tab__close {
  color: #222;
}

.rec-dot {
  width: 8px;
  height: 8px;
  border-radius: 50%;
  background: #cf2a27;
}

.bloom {
  width: 13px;
  color: #000;
  font: 900 16px/1 "Inter", sans-serif;
}

.tabstrip__new {
  margin-left: 6px;
}

.window-buttons {
  margin-left: auto;
  padding: 0 13px 1px 0;
  display: flex;
  align-items: center;
  gap: 28px;
  color: #222;
}

.addressbar {
  height: 32px;
  flex: none;
  box-sizing: border-box;
  border-bottom: 1px solid #c9c9c9;
  display: flex;
  align-items: center;
  background: #f7f7f7;
}

.addressbar .icon {
  stroke-width: 2;
}

.nav {
  width: 157px;
  display: flex;
  gap: 22px;
  padding-left: 16px;
  box-sizing: border-box;
}

.nav .icon:nth-child(2) {
  margin-right: -1px;
}

.url {
  width: 964px;
  height: 25px;
  box-sizing: border-box;
  padding: 0 10px 0 11px;
  border-radius: 3px;
  background: #fff;
  display: flex;
  align-items: center;
  gap: 18px;
  color: #777;
}

.url__text {
  flex: 1;
  margin-left: -6px;
  padding-bottom: 2px;
  font-size: 13px;
  letter-spacing: -0.23px;
}

.url__text b {
  font-weight: 400;
  color: #222;
}

.browser-actions {
  flex: 1;
  display: flex;
  align-items: center;
  justify-content: space-between;
  padding: 0 16px;
}

.avatar {
  width: 19px;
  height: 19px;
  border-radius: 50%;
  background: #cfcdca;
  display: flex;
  justify-content: center;
  overflow: hidden;
}

.avatar i {
  width: 7px;
  height: 7px;
  margin-top: 4px;
  border-radius: 50%;
  background: #85827e;
  box-shadow: 0 9px 0 2px #85827e;
}

/* app frame */
.app {
  height: 628px;
  flex: none;
  display: flex;
  background: #e0e3eb;
}

.draw {
  width: 44px;
  margin-right: 3px;
  background: #fff;
  display: flex;
  flex-direction: column;
  align-items: center;
  position: relative;
}

.draw__menu {
  width: 44px;
  height: 33px;
  box-sizing: border-box;
  border-bottom: 1px solid #e0e3eb;
  padding: 10px 0 0 14px;
  display: flex;
  flex-direction: column;
  gap: 3px;
  position: relative;
}

.draw__menu i {
  width: 15px;
  height: 2px;
  background: #3d3f47;
}

.draw__menu i:first-child {
  width: 9px;
}

.draw__menu::after {
  content: "";
  width: 3px;
  height: 3px;
  margin: 1px 0 0 6px;
  border-radius: 50%;
  background: #999;
}

.badge {
  position: absolute;
  left: 25px;
  top: 2px;
  width: 16px;
  height: 13px;
  border-radius: 7px;
  background: #f0476a;
  color: #fff;
  font-size: 9px;
  line-height: 13px;
  text-align: center;
}

.draw__group {
  width: 44px;
  border-bottom: 1.5px solid #e0e3eb;
  padding: 5px 0 5px;
}

.draw__group:nth-child(3) {
  padding-top: 8px;
}

.draw__group:nth-child(4) {
  padding-bottom: 6px;
}

.draw__group:nth-child(5) {
  border: 0;
}

.draw__tool {
  height: 30px;
  display: flex;
  align-items: center;
  justify-content: center;
}

.draw__group:nth-child(3) .draw__tool {
  height: 28px;
}

.draw__tool--active {
  color: #2f8fdc;
}

.draw__fav {
  width: 25px;
  height: 25px;
  margin-top: auto;
  margin-bottom: 19px;
  border-radius: 3px;
  background: #2196f3;
  color: #fff;
  display: flex;
  align-items: center;
  justify-content: center;
}

.center {
  width: 1024px;
  display: flex;
  flex-direction: column;
}

.topbar {
  height: 33px;
  box-sizing: border-box;
  border-bottom: 1px solid #e0e3eb;
  background: #fff;
  display: flex;
}

.cell {
  width: 32.6px;
  box-sizing: border-box;
  padding-bottom: 1px;
  border-right: 1px solid #e6e8ef;
  display: flex;
  align-items: center;
  justify-content: center;
  flex: none;
}

.cell--symbol {
  width: 84px;
  padding-left: 10px;
  justify-content: flex-start;
  font-size: 11.5px;
  font-weight: 600;
  letter-spacing: -0.75px;
}

.cell--text {
  font-size: 11.5px;
  font-weight: 600;
  letter-spacing: -0.5px;
}

.cell--fx {
  width: 48px;
  gap: 12px;
}

.cell--undo {
  width: 53px;
  gap: 11px;
}

.topbar__space {
  flex: 1;
  border-right: 1px solid #e6e8ef;
}

.cell--layout {
  width: 100px;
  gap: 5px;
  font-size: 11.5px;
  font-weight: 600;
  letter-spacing: -0.75px;
}

.cell--layout .icon:last-child {
  margin-left: 6px;
}

.cell--last {
  border: 0;
}

.cell--rec {
  width: 85px;
  gap: 6px;
  border: 0;
  background: #f04136;
  color: #fff;
  font-size: 12.5px;
  font-weight: 600;
}

.cell--mic {
  border: 0;
  background: #2196f3;
  color: #fff;
}

.cell--cam {
  border: 0;
  background: #2f323d;
  color: #fff;
}

.chart {
  height: 528px;
  position: relative;
  background: #fff;
}

.chart__canvas {
  display: block;
}

.axis path {
  stroke: #e0e3eb;
}

.tick {
  font-size: 10.5px;
  fill: #4a4d57;
}

.tick--day {
  text-anchor: middle;
}

.tick--bold {
  font-weight: 700;
  fill: #131722;
}

.tick--ccy {
  font-size: 9.5px;
}

.tag {
  font-size: 10.5px;
  font-weight: 600;
  fill: #fff;
}

.current-line {
  stroke: #dcb4b4;
  stroke-dasharray: 2 1;
}

.blue-level {
  stroke: #2287c8;
  stroke-width: 2;
}

.red-level {
  stroke: #fb2505;
  stroke-width: 6;
}

.wick {
  stroke: #333;
}

.body-up {
  fill: #55d63a;
  stroke: #235a1b;
}

.body-down {
  fill: #d4141c;
  stroke: #5e0c0c;
}

.sketch {
  fill: none;
  stroke: #0d0dd0;
  stroke-width: 2.5;
  stroke-linejoin: round;
  stroke-linecap: round;
}

.position text {
  fill: #fff;
  font: 10.5px "DejaVu Sans", sans-serif;
  letter-spacing: 0;
}

.anchor {
  fill: #fff;
  stroke: #2f7fc4;
  stroke-width: 1.3;
}

.sticker {
  fill: none;
  stroke: #3580bf;
  stroke-width: 2.2;
}

.sticker__fill {
  fill: #3580bf;
  stroke: none;
}

.count {
  font-size: 8.5px;
}

.ccy {
  fill: #fff;
  stroke: #dfe2ea;
}

.legend {
  font-size: 12.5px;
  fill: #22252e;
}

.legend--small {
  font-size: 10.5px;
  fill: #333;
}

.quote {
  fill: #fff;
}

.quote--sell {
  stroke: #e58a8a;
}

.quote--buy {
  stroke: #5aa5de;
}

.quote-text {
  font-size: 10.5px;
  fill: #555;
}

.quote-text--sup {
  font-size: 9px;
}

.quote-text--sell {
  fill: #d9484b;
}

.quote-text--buy {
  fill: #2f89d0;
}

.float {
  position: absolute;
  top: 1px;
  height: 33px;
  display: flex;
  background: #fff;
  border-radius: 3px;
  box-shadow: 0 1px 4px rgba(40, 50, 80, 0.4);
}

.float--drawing {
  left: 72px;
  width: 370px;
  color: #687484;
}

.float--favs {
  left: 892px;
  width: 77px;
}

.float__grip {
  width: 11px;
  flex: none;
  display: flex;
  align-items: center;
  justify-content: center;
  color: #bbb;
}

.float__cell {
  flex: 1;
  border-left: 1px solid #eceef3;
  display: flex;
  align-items: center;
  justify-content: center;
  gap: 3px;
  position: relative;
}

.float--favs .icon {
  stroke-width: 1.3;
}

.float__bar {
  position: absolute;
  left: 6px;
  right: 6px;
  bottom: 5px;
  height: 3px;
}

.float__bar--green {
  background: #3c7a40;
}

.float__bar--red {
  background: #ea5248;
}

.float__bar--grey {
  background: #777a85;
}

.caret {
  width: 0;
  border: 2.5px solid transparent;
  border-top-color: #333;
  margin-top: 2px;
}

.ranges {
  height: 32px;
  box-sizing: border-box;
  border-top: 1px solid #e0e3eb;
  margin-bottom: 3px;
  padding: 0 9px 2px 13px;
  background: #fff;
  border-radius: 0 0 3px 3px;
  display: flex;
  align-items: center;
  gap: 11.5px;
  font-size: 11.5px;
  letter-spacing: -0.55px;
  position: relative;
}

.ranges__item:nth-child(6) {
  margin-right: -1px;
}

.ranges__goto {
  margin-left: 16px;
}

.ranges__clock {
  margin-left: auto;
  letter-spacing: 0;
}

.ranges__mode {
  letter-spacing: -0.1px;
}

.ranges__mode--pct {
  margin-left: 17px;
}

.ranges__mode--log {
  margin-left: 1px;
}

.axis-gear {
  position: absolute;
  right: 18px;
  top: -19px;
}

.bottom-tabs {
  height: 32px;
  background: #fff;
  display: flex;
  letter-spacing: -0.4px;
}

.bottom-tabs__item {
  padding: 0 13px;
  border-right: 1px solid #e0e3eb;
  display: flex;
  align-items: center;
}

.bottom-tabs__item--first {
  gap: 8px;
  padding-right: 4px;
}

.bottom-tabs__end {
  margin-left: auto;
  padding-right: 12px;
  display: flex;
  align-items: center;
  gap: 13px;
}

/* watchlist and symbol details */
.side {
  width: 167px;
  margin-left: 4px;
  display: flex;
  flex-direction: column;
  position: relative;
}

.watch {
  height: 297px;
  overflow: hidden;
  background: #fff;
}

.watch__title {
  height: 39px;
  padding: 0 17px 0 12px;
  display: flex;
  align-items: center;
  gap: 6px;
  font-size: 11.5px;
  font-weight: 600;
}

.watch__add {
  margin-left: auto;
}

.row {
  height: 25px;
  box-sizing: border-box;
  border-bottom: 1px solid #f0f1f5;
  padding: 0 7px 2px 14px;
  display: grid;
  grid-template-columns: 32px 39px 34px 41px;
  align-items: center;
  text-align: right;
  position: relative;
  white-space: nowrap;
  font-size: 11.5px;
  letter-spacing: -0.38px;
}

.row > span {
  display: flex;
  justify-content: flex-end;
}

.row .row__symbol {
  justify-content: flex-start;
  overflow: hidden;
  letter-spacing: -0.6px;
}

.row--head {
  height: 23px;
  padding-bottom: 0;
  color: #6a6d78;
  border-color: #e0e3eb;
}

.row--head .row__symbol {
  overflow: visible;
  letter-spacing: -0.5px;
}

.row--active {
  border: 0;
  padding-bottom: 3px;
  outline: 1px solid #2a84c8;
  outline-offset: -1px;
}

.row .row__symbol--dot {
  align-items: center;
  gap: 3px;
  letter-spacing: -0.3px;
}

.status-dot {
  width: 5px;
  height: 5px;
  flex: none;
  border-radius: 50%;
  background: #ff9800;
}

.more {
  position: absolute;
  left: 5px;
  top: 7px;
  width: 2px;
  height: 2px;
  background: #555;
  box-shadow: 0 4px #555, 0 8px #555;
}

.flag {
  position: absolute;
  left: 0;
  top: 7px;
  width: 10px;
  height: 10px;
  background: #fa5258;
  clip-path: polygon(0 0, 100% 0, 70% 50%, 100% 100%, 0 100%);
}

.detail {
  height: 328px;
  margin-top: 3px;
  padding: 0 14px;
  box-sizing: border-box;
  overflow: hidden;
  background: #fff;
}

.detail__name {
  height: 40px;
  display: flex;
  align-items: center;
  gap: 6px;
  font-size: 11.5px;
  font-weight: 600;
  letter-spacing: -0.5px;
}

.detail__change {
  height: 24px;
  line-height: 25px;
  color: #dc3c3a;
  font-size: 12.5px;
  letter-spacing: 0;
}

.detail__market {
  height: 8px;
  display: flex;
  align-items: center;
  gap: 3px;
  color: #1a9a85;
  font-size: 9px;
}

.detail__market i {
  width: 5px;
  height: 5px;
  border-radius: 50%;
  background: currentColor;
}

.pills {
  height: 41px;
  display: flex;
  align-items: center;
  gap: 7px;
}

.pill {
  width: 47px;
  height: 15px;
  border-radius: 8px;
  line-height: 15px;
  text-align: center;
  font-size: 10.5px;
}

sup {
  font-size: 8px;
  line-height: 0;
  vertical-align: 3px;
}

.pill--buy {
  background: #dcedfb;
  color: #2f89d0;
}

.pill--sell {
  background: #fbdfe0;
  color: #dc3c3a;
}

.range {
  height: 14px;
  margin-top: -2px;
  display: flex;
  align-items: center;
  justify-content: space-between;
  font-size: 10.5px;
}

.range em {
  color: #9598a1;
  font-size: 9px;
  font-style: normal;
  letter-spacing: -0.1px;
}

.track {
  height: 5px;
  margin-top: 4px;
  background: #f0f1f5;
  border-radius: 3px;
}

.track i {
  display: block;
  height: 5px;
  background: #ee4439;
}

.track__day {
  width: 95px;
  margin-left: 4px;
}

.track__year {
  width: 6px;
  margin-left: 97px;
}

.marker {
  width: 8px;
  height: 6px;
  margin-top: 2px;
  background: #333;
  clip-path: polygon(50% 0, 100% 100%, 0 100%);
}

.marker--year {
  margin-left: 93px;
}

.range--year {
  margin-top: 8px;
}

h4 {
  margin: 18px 0 0;
  height: 20px;
  line-height: 20px;
  font-size: 11.5px;
  font-weight: 600;
}

.perf {
  margin-top: 4px;
  display: grid;
  grid-template-columns: repeat(3, 43px);
  gap: 7px 5.500px;
}

.perf__tile {
  height: 27px;
  display: flex;
  flex-direction: column;
  align-items: center;
  justify-content: center;
  color: #9598a1;
  font-size: 9px;
  line-height: 11px;
}

.perf__tile b {
  font-size: 10px;
  font-weight: 400;
}

.perf__tile--up {
  background: #eefaf6;
}

.perf__tile--down {
  background: #fdf0f0;
}

.neutral {
  margin-top: 3px;
  text-align: center;
  font-size: 10px;
  line-height: 11px;
  color: #777;
}

.side__handle {
  position: absolute;
  left: -2px;
  top: 558px;
  width: 6px;
  height: 21px;
  line-height: 19px;
  border-radius: 3px;
  background: #fff;
  color: #888;
  font-size: 11px;
  text-align: center;
}

.rail {
  flex: 1;
  background: #eef1f9;
  overflow: hidden;
}

.rail__group {
  border-bottom: 1px solid #d6d9e3;
  padding: 5px 0;
}

.rail__group:first-child {
  padding-top: 0;
}

.rail__group:last-child {
  border: 0;
}

.rail__item {
  height: 41.6px;
  display: flex;
  align-items: center;
  justify-content: center;
  position: relative;
  color: #33363f;
}

.rail__group:last-child {
  padding-top: 9px;
}

.rail__group:last-child .rail__item {
  height: 39px;
}

.rail__item .icon {
  stroke-width: 1.4;
}

.rail__item--active {
  background: #fff;
  color: #2a8ccb;
}

.rail__dot {
  position: absolute;
  left: 23px;
  top: 6px;
  width: 12px;
  height: 12px;
  border-radius: 50%;
  background: #f94e70;
}

/* screen sharing notice */
.share {
  position: absolute;
  left: 463px;
  top: 618px;
  width: 353px;
  height: 35px;
  box-sizing: border-box;
  padding: 0 0 1px 9px;
  background: #fff;
  box-shadow: 0 3px 9px rgba(0, 0, 0, 0.45);
  display: flex;
  align-items: center;
  color: #555;
  font-size: 10px;
  letter-spacing: -0.3px;
  white-space: nowrap;
}

.share__grip {
  width: 2px;
  height: 9px;
  margin-right: 9px;
  border: solid #ccc;
  border-width: 0 1px;
}

.share__stop {
  width: 84px;
  height: 27px;
  padding: 0;
  margin-left: auto;
  border: 0;
  border-radius: 2px;
  background: #0b79d9;
  color: #fff;
  font: 600 10.5px "Open Sans", sans-serif;
  letter-spacing: -0.4px;
}

.share__hide {
  margin: 0 10px;
  color: #1b72c0;
  font-size: 10.5px;
  letter-spacing: -0.3px;
  text-decoration: underline;
}

/* windows taskbar */
.taskbar {
  height: 33px;
  flex: none;
  display: flex;
  background: #3b3b3b;
  color: #fff;
}

.taskbar__start {
  width: 40px;
  background: #454545;
  display: flex;
  align-items: center;
  justify-content: center;
}

.taskbar__search {
  width: 286px;
  box-sizing: border-box;
  padding-left: 10px;
  background: #f2f2f2;
  color: #444;
  display: flex;
  align-items: center;
  gap: 10px;
  font-size: 12.5px;
}

.task {
  width: 41.3px;
  box-sizing: border-box;
  border-bottom: 2px solid transparent;
  display: flex;
  align-items: center;
  justify-content: center;
  position: relative;
}

.task--focused {
  background: #666;
  border-color: #76b9ed;
}

.task--running::after {
  content: "";
  position: absolute;
  left: 4px;
  right: 4px;
  bottom: -2px;
  height: 2px;
  background: #76b9ed;
}

.task--alert {
  background: #b0682d;
  border-color: #f57a12;
}

.task__tile {
  width: 20px;
  height: 20px;
  background: #fff;
  display: flex;
  align-items: center;
  justify-content: center;
}

.task__count {
  position: absolute;
  left: 20px;
  top: 18px;
  padding: 0 2px;
  border-radius: 4px;
  background: #e23636;
  font-size: 7px;
  line-height: 9px;
}

.tray {
  margin-left: auto;
  display: flex;
  align-items: center;
  gap: 6.800px;
}

.tray .icon {
  stroke-width: 1.9;
}

.lang {
  align-self: center;
  margin-left: 10px;
  width: 20px;
  font-size: 10.5px;
  letter-spacing: -0.6px;
}

.clock {
  width: 45px;
  margin-left: 11px;
  display: flex;
  flex-direction: column;
  align-items: center;
  justify-content: center;
  font-size: 10.5px;
  letter-spacing: -0.3px;
  line-height: 15px;
}

.notif {
  width: 34px;
  margin-left: 15px;
  display: flex;
  align-items: center;
  position: relative;
}

.notif::after {
  content: "";
  position: absolute;
  right: 3px;
  top: 0;
  bottom: 0;
  width: 1px;
  background: #888;
}

.notif span {
  position: absolute;
  left: 7px;
  top: 15px;
  width: 13px;
  height: 13px;
  box-sizing: border-box;
  border: 1px solid #999;
  border-radius: 50%;
  background: #3b3b3b;
  font-size: 9px;
  line-height: 11px;
  text-align: center;
}
</style>
